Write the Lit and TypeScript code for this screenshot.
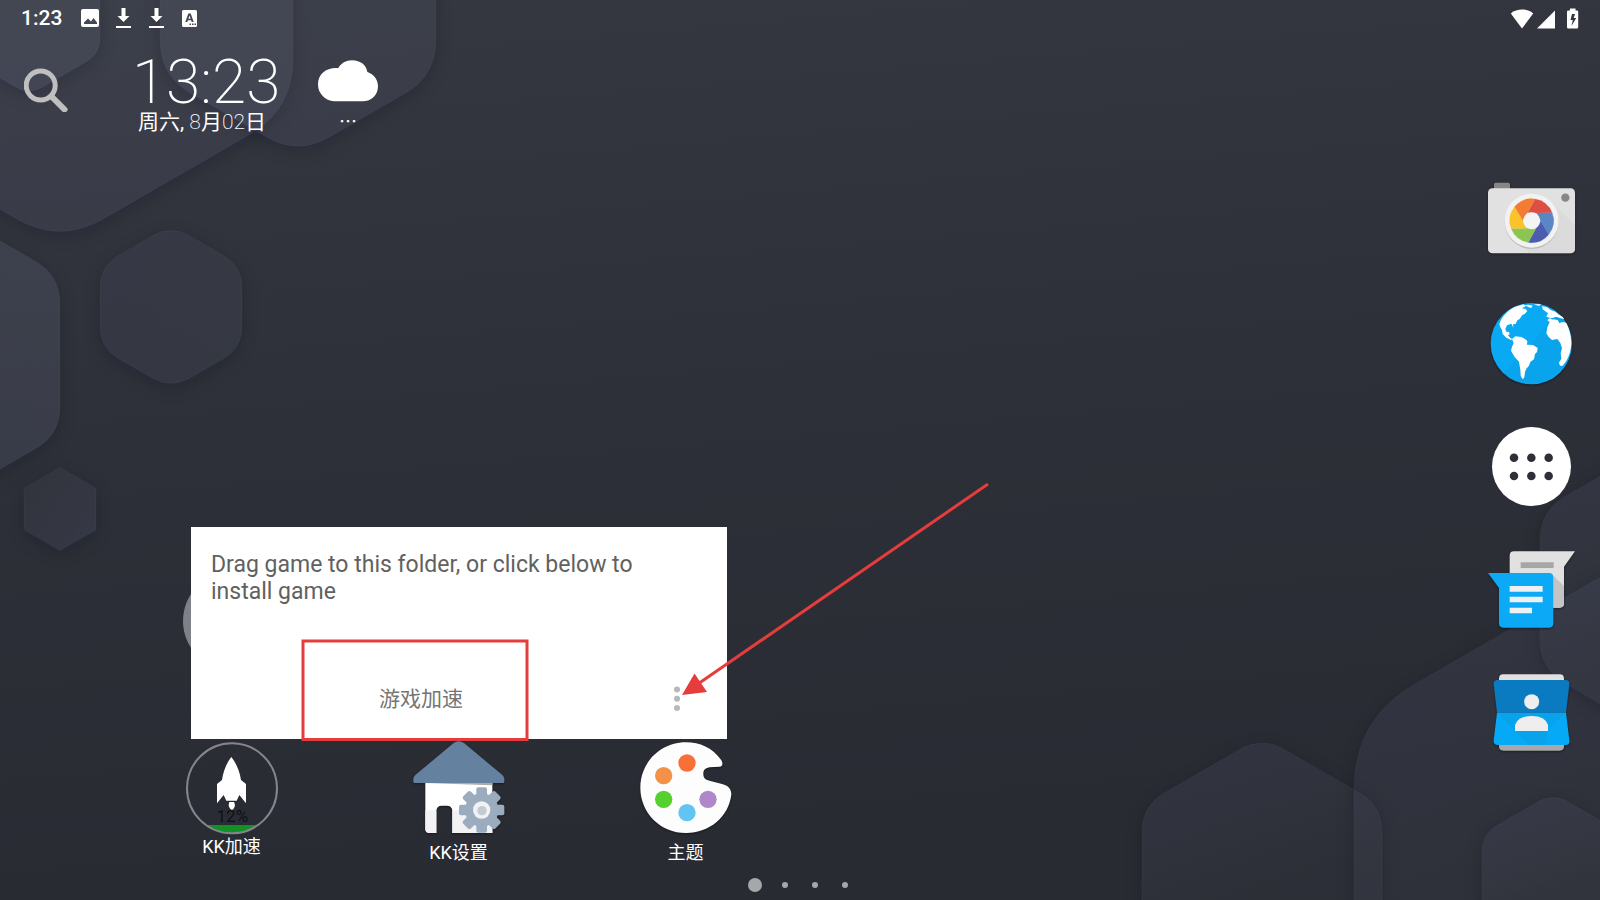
import { LitElement, html, css, svg } from "lit";
import { customElement } from "lit/decorators.js";

type Point = [number, number];

/** Closed polygon path whose corners are rounded by cutting `r` pixels off each side. */
function roundedPath(points: Point[], r: number): string {
  const n = points.length;
  const toward = (a: Point, b: Point): Point => {
    const len = Math.hypot(b[0] - a[0], b[1] - a[1]);
    const k = Math.min(r, len / 2) / len;
    return [a[0] + (b[0] - a[0]) * k, a[1] + (b[1] - a[1]) * k];
  };
  return (
    points
      .map((p, i) => {
        const start = toward(p, points[(i + n - 1) % n]);
        const end = toward(p, points[(i + 1) % n]);
        return `${i ? "L" : "M"}${start} Q${p} ${end}`;
      })
      .join(" ") + "Z"
  );
}

/** Pointy-top hexagon around (cx, cy) with half width w. */
function hexagon(cx: number, cy: number, w: number, r: number): string {
  const h = w * 0.577;
  return roundedPath(
    [
      [cx, cy - 2 * h],
      [cx + w, cy - h],
      [cx + w, cy + h],
      [cx, cy + 2 * h],
      [cx - w, cy + h],
      [cx - w, cy - h],
    ],
    r
  );
}

const HEXAGONS = [
  { d: hexagon(60, -25, 233, 50), fill: "a" },
  { d: hexagon(298, -4, 138, 36), fill: "a" },
  { d: hexagon(29, 13, 71, 16), fill: "a" },
  { d: hexagon(-78, 355, 138, 28), fill: "b" },
  { d: hexagon(171, 307, 71, 22), fill: "c" },
  { d: hexagon(60, 509, 36, 1), fill: "d" },
  { d: hexagon(1262, 875, 120, 26), fill: "e" },
  { d: hexagon(1650, 890, 296, 70), fill: "e" },
  { d: hexagon(1677, 590, 137, 30), fill: "e" },
  { d: hexagon(1553, 875, 71, 18), fill: "e" },
];

@customElement("launcher-wallpaper")
class LauncherWallpaper extends LitElement {
  static styles = css`
    :host {
      display: block;
    }
    .art {
      display: block;
      width: 100%;
      height: 100%;
    }
  `;

  render() {
    return html`
      <svg class="art" viewBox="0 0 1600 900" preserveAspectRatio="none" aria-hidden="true">
        <defs>
          <linearGradient id="sky" x1="0" y1="0" x2="0.15" y2="1">
            <stop offset="0" stop-color="#353841" />
            <stop offset="0.5" stop-color="#2d3038" />
            <stop offset="1" stop-color="#292b33" />
          </linearGradient>
          <linearGradient id="a" x1="0" y1="0" x2="0" y2="1">
            <stop offset="0.4" stop-color="#a0a8c0" stop-opacity="0.07" />
            <stop offset="1" stop-color="#8080b0" stop-opacity="0.1" />
          </linearGradient>
          <linearGradient id="b" x1="1" y1="0" x2="0.6" y2="1">
            <stop offset="0" stop-color="#8890b0" stop-opacity="0.15" />
            <stop offset="1" stop-color="#8890b8" stop-opacity="0.12" />
          </linearGradient>
          <linearGradient id="c" x1="0" y1="0" x2="1" y2="1">
            <stop offset="0" stop-color="#7070b0" stop-opacity="0.08" />
            <stop offset="1" stop-color="#a0a8b8" stop-opacity="0.06" />
          </linearGradient>
          <linearGradient id="d" x1="0" y1="0" x2="1" y2="1">
            <stop offset="0" stop-color="#a0a8b8" stop-opacity="0.03" />
            <stop offset="1" stop-color="#7878b8" stop-opacity="0.12" />
          </linearGradient>
          <linearGradient id="e" x1="0.3" y1="0" x2="0.5" y2="0.6">
            <stop offset="0" stop-color="#7878b8" stop-opacity="0.1" />
            <stop offset="1" stop-color="#a0a8b8" stop-opacity="0.03" />
          </linearGradient>
          <filter id="soft" x="-20%" y="-20%" width="140%" height="140%">
            <feGaussianBlur stdDeviation="8" />
          </filter>
        </defs>
        <rect width="1600" height="900" fill="url(#sky)" />
        ${HEXAGONS.map(
          (h, i) => svg`
            <mask id=${"out" + i} maskUnits="userSpaceOnUse" x="0" y="0" width="1600" height="900">
              <rect width="1600" height="900" fill="#fff" />
              <path d=${h.d} fill="#000" />
            </mask>
            <g mask=${`url(#out${i})`}>
              <path d=${h.d} fill="#1a1b26" fill-opacity="0.2" filter="url(#soft)" transform="translate(0 4)" />
            </g>
            <path d=${h.d} fill=${`url(#${h.fill})`} stroke="#8c90b0" stroke-opacity="0.07" />`
        )}
      </svg>
    `;
  }
}

@customElement("status-bar")
class StatusBar extends LitElement {
  static styles = css`
    :host {
      display: flex;
      align-items: center;
      justify-content: space-between;
      height: 36px;
      padding: 0 20px 0 21px;
      color: #fff;
      font: 500 21px/36px Roboto, sans-serif;
    }
    .group {
      display: flex;
      align-items: center;
    }
    .notices {
      gap: 15px;
    }
    .clock {
      margin-right: 4px;
    }
    svg {
      display: block;
      fill: #fff;
    }
  `;

  render() {
    const download = html`
      <svg width="18" height="22" viewBox="0 0 18 22" aria-hidden="true">
        <path d="M7.500 1h4v8h4l-6 6-6-6h4zM2 19h15v2H2z" />
      </svg>
    `;
    return html`
      <div class="group notices">
        <time class="clock">1:23</time>
        <svg width="18" height="18" viewBox="0 0 18 18" aria-hidden="true">
          <path
            fill-rule="evenodd"
            d="M2 0h14a2 2 0 0 1 2 2v14a2 2 0 0 1-2 2H2a2 2 0 0 1-2-2V2a2 2 0 0 1 2-2zM3 15h13v-1.500l-3.500-4.500-2.500 3.500-3-3-4 4z"
          />
        </svg>
        ${download}${download}
        <svg width="18" height="17" viewBox="-2 0 18 17" aria-hidden="true">
          <path
            fill-rule="evenodd"
            d="M1.500 0h12A1.500 1.500 0 0 1 15 1.500v14a1.500 1.500 0 0 1-1.500 1.500h-12A1.500 1.500 0 0 1 0 15.500v-14A1.500 1.500 0 0 1 1.500 0zM6.300 3.500 3.300 12h2l.6-1.800h3.200L9.700 12h2L8.700 3.500zm.1 5.200L7.500 5.400l1.100 3.300zM7.500 13.500v1.500H9v-1.500zm2.500 0v1.500h1.500v-1.500zm2.500 0v1.500H14v-1.500z"
          />
        </svg>
      </div>
      <svg width="70" height="22" viewBox="0 0 70 22" role="img" aria-label="Wi-Fi, signal, charging">
        <path d="M12 21.500.8 6.500C4 3.500 8 2.500 12 2.500s8 1 11.200 4z" />
        <path d="M27 21.500h18v-18z" />
        <path
          fill-rule="evenodd"
          d="M60 1.500h5.500v2H67a1.200 1.200 0 0 1 1.200 1.200v15.600a1.200 1.200 0 0 1-1.200 1.200h-8.800a1.200 1.200 0 0 1-1.200-1.200V4.700a1.200 1.200 0 0 1 1.200-1.200H60zM62 7l-1.500 6h2.300l-1.300 6 4.700-8h-2.500l1.300-4z"
        />
      </svg>
    `;
  }
}

@customElement("clock-widget")
class ClockWidget extends LitElement {
  static styles = css`
    :host {
      display: flex;
      align-items: flex-start;
      color: #fff;
      padding: 18px 24px 0;
    }
    .search {
      margin: 14px 64px 0 0;
      padding: 0;
      border: 0;
      background: none;
    }
    svg {
      display: block;
    }
    .now {
      width: 150px;
      margin-right: 36px;
    }
    .time {
      display: block;
      font: 200 62px/56px Roboto, sans-serif;
      white-space: nowrap;
    }
    .date {
      display: block;
      padding-left: 6px;
      font: 400 21px/24px Roboto, "Noto Sans CJK SC", sans-serif;
      white-space: nowrap;
    }
    .thin {
      font-weight: 200;
    }
    .weather {
      padding-top: 6px;
      text-align: center;
    }
    .temp {
      font: 400 18px/36px "Noto Sans CJK SC", sans-serif;
    }
  `;

  render() {
    return html`
      <button class="search" aria-label="Search">
        <svg width="44" height="44" viewBox="0 0 44 44" fill="none" stroke="#bfbfbf">
          <circle cx="16.700" cy="17.500" r="14.500" stroke-width="5" />
          <path d="M27.500 28.500 40.500 41.500" stroke-width="6" stroke-linecap="round" />
        </svg>
      </button>
      <div class="now">
        <time class="time">13:23</time>
        <span class="date" lang="zh-CN"
          >周六, <span class="thin">8</span>月<span class="thin">02</span>日</span
        >
      </div>
      <div class="weather">
        <svg width="60" height="42" viewBox="954 180 180 124" fill="#fff" aria-hidden="true">
          <path
            d="M1002 303a50 51 0 0 1-48-51c0-33 26-52 61-49 8-14 23-23 41-23 26 0 43 15 46 35 20 7 32 23 32 42 0 27-19 46-46 46z"
          />
        </svg>
        <div class="temp" lang="zh-CN">…</div>
      </div>
    `;
  }
}

@customElement("app-dock")
class AppDock extends LitElement {
  static styles = css`
    :host {
      display: flex;
      flex-direction: column;
      gap: 31px;
    }
    .app {
      display: block;
      padding: 0;
      border: 0;
      background: none;
    }
    svg {
      display: block;
      width: 92px;
      height: 92px;
      overflow: visible;
    }
    .raised {
      filter: drop-shadow(0 1px 1px rgba(0, 0, 0, 0.4));
    }
  `;

  private camera() {
    const colors = ["#dd4f45", "#5b86c6", "#4d5caf", "#8dc553", "#fcc22a", "#f47b33"];
    const at = (deg: number, r: number): string => {
      const a = (deg * Math.PI) / 180;
      return `${(185 + r * Math.cos(a)).toFixed(1)} ${(152 + r * Math.sin(a)).toFixed(1)}`;
    };
    return svg`
      <path d="M72 58V43q0-5 5-5h38q5 0 5 5v15z" fill="#868686" />
      <rect x="54" y="55" width="261" height="195" rx="13" fill="#e1e1e1" />
      <path d="M242 95 315 165v72q0 13-13 13H180l-45-45z" fill="#d3d3d3" opacity=".4" />
      <circle cx="185" cy="156" r="81" fill="#bdbdbd" />
      <circle cx="185" cy="152" r="81" fill="#f2f2f2" />
      ${colors.map((c, i) => {
        const s = i * 60;
        return svg`<path fill=${c} stroke=${c} stroke-width=".5" d=${`M${at(s - 81, 66)} A66 66 0 0 1 ${at(s - 21, 66)} L${at(s - 58, 27)} L${at(s - 118, 27)}Z`} />`;
      })}
      <circle cx="185" cy="152" r="25.500" fill="#f4f4f4" />
      <circle cx="286" cy="83" r="12.500" fill="#868686" />`;
  }

  private globe() {
    return svg`
      <circle cx="184" cy="521" r="122" fill="#0aa9f4" />
      <path d="M262 427A122 122 0 0 1 100 610L184 521z" fill="#0b9de4" opacity=".4" />
      <g fill="#fff">
        <path d="M92 474 88 463C95 440 112 423 132 412L160 403 168 408 155 415 166 416 172 423 164 432 157 435 149 447 142 451 137 462 129 463 130 473 124 461 111 466 106 477 109 485 117 486 119 493 114 496 121 504 127 507 123 510 109 503 98 492 96 480z" />
        <path d="M126 507 136 499 154 501 165 507 172 513 171 524 189 525 203 534 201 546 195 552 192 568 181 576 177 587 169 596 165 606 163 622 158 628 152 617 151 599 147 575 134 561 123 542 126 530 131 519z" />
        <path d="M164 406 174 404 188 407 183 414 175 411zM191 403 213 403 207 408zM216 409 230 411 242 420 256 425 265 433 278 441 283 448 270 444 258 440 248 444 238 443 229 440 234 430 226 424 218 418zM232 450 240 444 248 450 239 456z" />
        <path d="M240 454 249 448 263 450 268 459 280 456 289 459C297 475 303 495 304 516 304 545 293 572 278 587L270 587 267 578 274 566 272 550 276 535 271 519 262 507 246 510 236 501 229 490 232 472z" />
      </g>`;
  }

  private apps() {
    return svg`
      <circle cx="184.500" cy="169.500" r="118.500" fill="#fff" />
      <g fill="#2d3039">
        ${[132, 184, 236].map((x) =>
          [143, 198].map((y) => svg`<circle cx=${x} cy=${y} r="12.800" />`)
        )}
      </g>`;
  }

  private messages() {
    return svg`
      <path d="M132 424H315L282 470V580q0 13-13 13H119V437q0-13 13-13z" fill="#e1e1e1" />
      <path d="M250 497 282 528v52q0 13-13 13h-19z" fill="#c4c4c4" />
      <path d="M152 457h99v17h-99z" fill="#a6a6a6" />
      <path d="M54 489H237q13 0 13 13V640q0 13-13 13H100q-13 0-13-13V534z" fill="#0caaf6" />
      <path d="M119 528h99v17h-99zM119 560h99v17h-99zM119 593h67v17h-67z" fill="#eef1f3" />`;
  }

  private contacts() {
    return svg`
      <path d="M100 793H269q13 0 13 13v10H87v-10q0-13 13-13z" fill="#e1e1e1" />
      <path d="M87 1000H282v9q0 13-13 13H100q-13 0-13-13z" fill="#a8a8a8" />
      <path d="M84 810H286q13 0 12 13L288 908H81L71 823q-1-13 13-13z" fill="#0b7bc1" />
      <path d="M81 908H288L298 991q2 14-12 14H84q-14 0-13-14z" fill="#06a9f5" />
      <path d="M81 908H288L232 962 228 1005H178z" fill="#1299de" opacity=".35" />
      <circle cx="185" cy="875" r="22.500" fill="#eee" />
      <path d="M135 963V945Q144 918 185 918T234 945V963z" fill="#eee" />`;
  }

  render() {
    const items: [string, string, unknown, boolean][] = [
      ["Camera", "48 12 276 276", this.camera(), true],
      ["Browser", "48 381 276 276", this.globe(), true],
      ["All apps", "48 30 276 276", this.apps(), false],
      ["Messages", "48 399 276 276", this.messages(), true],
      ["Contacts", "48 768 276 276", this.contacts(), true],
    ];
    return items.map(
      ([label, box, art, raised]) => html`
        <button class="app" aria-label=${label}>
          <svg class=${raised ? "raised" : ""} viewBox=${box}>${art}</svg>
        </button>
      `
    );
  }
}

@customElement("folder-popup")
class FolderPopup extends LitElement {
  static styles = css`
    :host {
      display: block;
      box-sizing: border-box;
      width: 536px;
      padding: 24px 20px 20px;
      background: #fff;
    }
    .hint {
      margin: 0;
      padding-right: 40px;
      min-height: 128px;
      color: #616161;
      font: 400 23px/27px Roboto, sans-serif;
    }
    .footer {
      display: flex;
      align-items: center;
      margin: 0 4px 0 -20px;
    }
    .name {
      flex: 1;
      min-width: 0;
      height: 40px;
      padding: 0;
      border: 0;
      background: none;
      color: #757575;
      text-align: center;
      font: 400 21px/40px Roboto, "Noto Sans CJK SC", sans-serif;
    }
    .more {
      width: 52px;
      height: 40px;
      padding: 0;
      border: 0;
      background: none;
    }
    .more svg {
      display: block;
      margin: 0 auto;
    }
    .notes {
      position: absolute;
      left: 0;
      top: 0;
      width: 100%;
      height: 100%;
      overflow: visible;
      pointer-events: none;
    }
  `;

  render() {
    return html`
      <p class="hint">Drag game to this folder, or click below to install game</p>
      <div class="footer">
        <input class="name" aria-label="Folder name" lang="zh-CN" value="游戏加速" />
        <button class="more" aria-label="More options">
          <svg width="6" height="26" viewBox="0 0 6 26" fill="#b8b8b8">
            <circle cx="3" cy="3.500" r="3" />
            <circle cx="3" cy="12.700" r="3" />
            <circle cx="3" cy="22" r="3" />
          </svg>
        </button>
      </div>
      <svg class="notes" viewBox="0 0 536 212" aria-hidden="true">
        <rect x="112" y="114" width="224" height="98.500" fill="none" stroke="#e53c3c" stroke-width="3" />
        <path d="M797-43 504 159" stroke="#e53c3c" stroke-width="3" />
        <path d="M491 168 503.500 146.500 516 165z" fill="#e53c3c" />
      </svg>
    `;
  }
}

@customElement("home-screen")
class HomeScreen extends LitElement {
  static styles = css`
    :host {
      display: block;
      position: relative;
    }
    .row {
      display: grid;
      grid-template-columns: repeat(6, 1fr);
      justify-items: center;
      padding: 0 120px 0 118px;
    }
    .folders {
      padding-bottom: 72px;
    }
    .folder {
      width: 98px;
      height: 98px;
      padding: 0;
      border: 0;
      border-radius: 50%;
      background: #808188;
    }
    .item {
      display: flex;
      flex-direction: column;
      align-items: center;
      gap: 7px;
      padding: 0;
      border: 0;
      background: none;
      color: #fff;
      font: 400 18px/24px Roboto, "Noto Sans CJK SC", sans-serif;
    }
    .widget {
      gap: 1px;
    }
    svg {
      display: block;
      width: 92px;
      height: 92px;
      overflow: visible;
    }
    .percent {
      font: 400 51px Roboto, sans-serif;
    }
    .raised {
      filter: drop-shadow(0 1px 1px rgba(0, 0, 0, 0.4));
    }
    .popup {
      position: absolute;
      left: 191px;
      bottom: calc(100% - 167px);
    }
  `;

  private gear() {
    const teeth = [0, 45, 90, 135, 180, 225, 270, 315];
    return svg`
      <g fill="#9bacbf">
        <circle cx="934" cy="239" r="50" />
        ${teeth.map(
          (a) => svg`<path d="M918 195 918 177q0-6 6-6h20q6 0 6 6l0 18z" transform=${`rotate(${a} 934 239)`} />`
        )}
      </g>
      <circle cx="934" cy="239" r="26" fill="#f0f2f4" />
      <circle cx="935" cy="241" r="14" fill="#c3cad2" />`;
  }

  render() {
    return html`
      <div class="row folders">
        <button class="folder" aria-label="Game folder"></button>
      </div>
      <folder-popup class="popup"></folder-popup>
      <div class="row" lang="zh-CN">
        <button class="item widget">
          <svg viewBox="48 37 276 276">
            <clipPath id="tank"><circle cx="186" cy="176" r="134" /></clipPath>
            <path d="M48 286h276v30H48z" fill="#0f9126" clip-path="url(#tank)" />
            <circle cx="186" cy="176" r="135" fill="none" stroke="#85868c" stroke-width="6" />
            <path
              fill="#fff"
              d="M184 82C197 98 209 122 213 151L228 163V221L208 196 200 213H169L161 196 141 221V163L156 151C160 122 171 98 184 82zM178 217h14q4 7 2 14-3 8-8 10-6-2-9-10-2-7 1-14z"
            />
            <text class="percent" x="187" y="276" text-anchor="middle" fill="#101014">12%</text>
          </svg>
          <span>KK加速</span>
        </button>
        <button class="item">
          <svg class="raised" viewBox="728 35 276 276">
            <path d="M765 155H966V308H846V240q-2-14-16-14h-16q-14 0-16 14v68H778q-13 0-13-13z" fill="#fff" />
            <path d="M765 240h33v68H778q-13 0-13-13zM846 240H966v68H846z" fill="#f2f2f4" />
            <path d="M765 158H966v7z" fill="#aaa" />
            <path d="M850 38q15-10 31 0L996 134q6 6 6 12v8q0 4-4 4H733q-4 0-4-4v-8q0-6 6-12z" fill="#6481a0" />
            ${this.gear()}
          </svg>
          <span>KK设置</span>
        </button>
        <button class="item">
          <svg class="raised" viewBox="122 35 276 276">
            <path
              fill="#fdfdfd"
              d="M260 36C302 36 338 52 365 88 373 100 369 109 360 109L330 111C317 114 312 119 312 131 312 143 319 149 333 152L368 161C387 166 396 176 396 192 389 259 331 308 260 308 184 308 123 248 123 172S184 36 260 36z"
            />
            <circle cx="263" cy="98" r="26" fill="#f87038" />
            <circle cx="193" cy="136" r="26" fill="#f39149" />
            <circle cx="193" cy="207" r="26" fill="#55d12c" />
            <circle cx="263" cy="247" r="26" fill="#62c4f2" />
            <circle cx="326" cy="207" r="26" fill="#b088c9" />
          </svg>
          <span>主题</span>
        </button>
      </div>
    `;
  }
}

@customElement("app-root")
class AppRoot extends LitElement {
  static styles = css`
    :host {
      display: flex;
      flex-direction: column;
      position: relative;
      min-height: 100vh;
      overflow: hidden;
      isolation: isolate;
      background: #2d3038;
    }
    .wallpaper {
      position: absolute;
      inset: 0;
      z-index: -1;
    }
    .desktop {
      flex: 1;
      display: grid;
      grid-template-columns: 1fr;
      grid-template-rows: auto 1fr auto auto;
    }
    .clock {
      grid-area: 1 / 1;
    }
    .home {
      grid-area: 3 / 1;
    }
    .dock {
      grid-area: 1 / 1 / 5 / 2;
      place-self: center end;
      padding: 0 22px 4px 0;
    }
    .pages {
      display: flex;
      align-items: center;
      justify-content: center;
      gap: 24px;
      margin: 13px 0 8px;
      padding: 0;
      grid-area: 4 / 1;
      list-style: none;
    }
    .page {
      width: 6px;
      height: 6px;
      border-radius: 50%;
      background: #a6a7ab;
    }
    .current {
      width: 14px;
      height: 14px;
      margin: 0 -4px;
    }
  `;

  render() {
    return html`
      <launcher-wallpaper class="wallpaper"></launcher-wallpaper>
      <status-bar></status-bar>
      <main class="desktop">
        <clock-widget class="clock"></clock-widget>
        <home-screen class="home"></home-screen>
        <app-dock class="dock"></app-dock>
        <ul class="pages" aria-label="Pages">
          <li class="page current"></li>
          <li class="page"></li>
          <li class="page"></li>
          <li class="page"></li>
        </ul>
      </main>
    `;
  }
}
